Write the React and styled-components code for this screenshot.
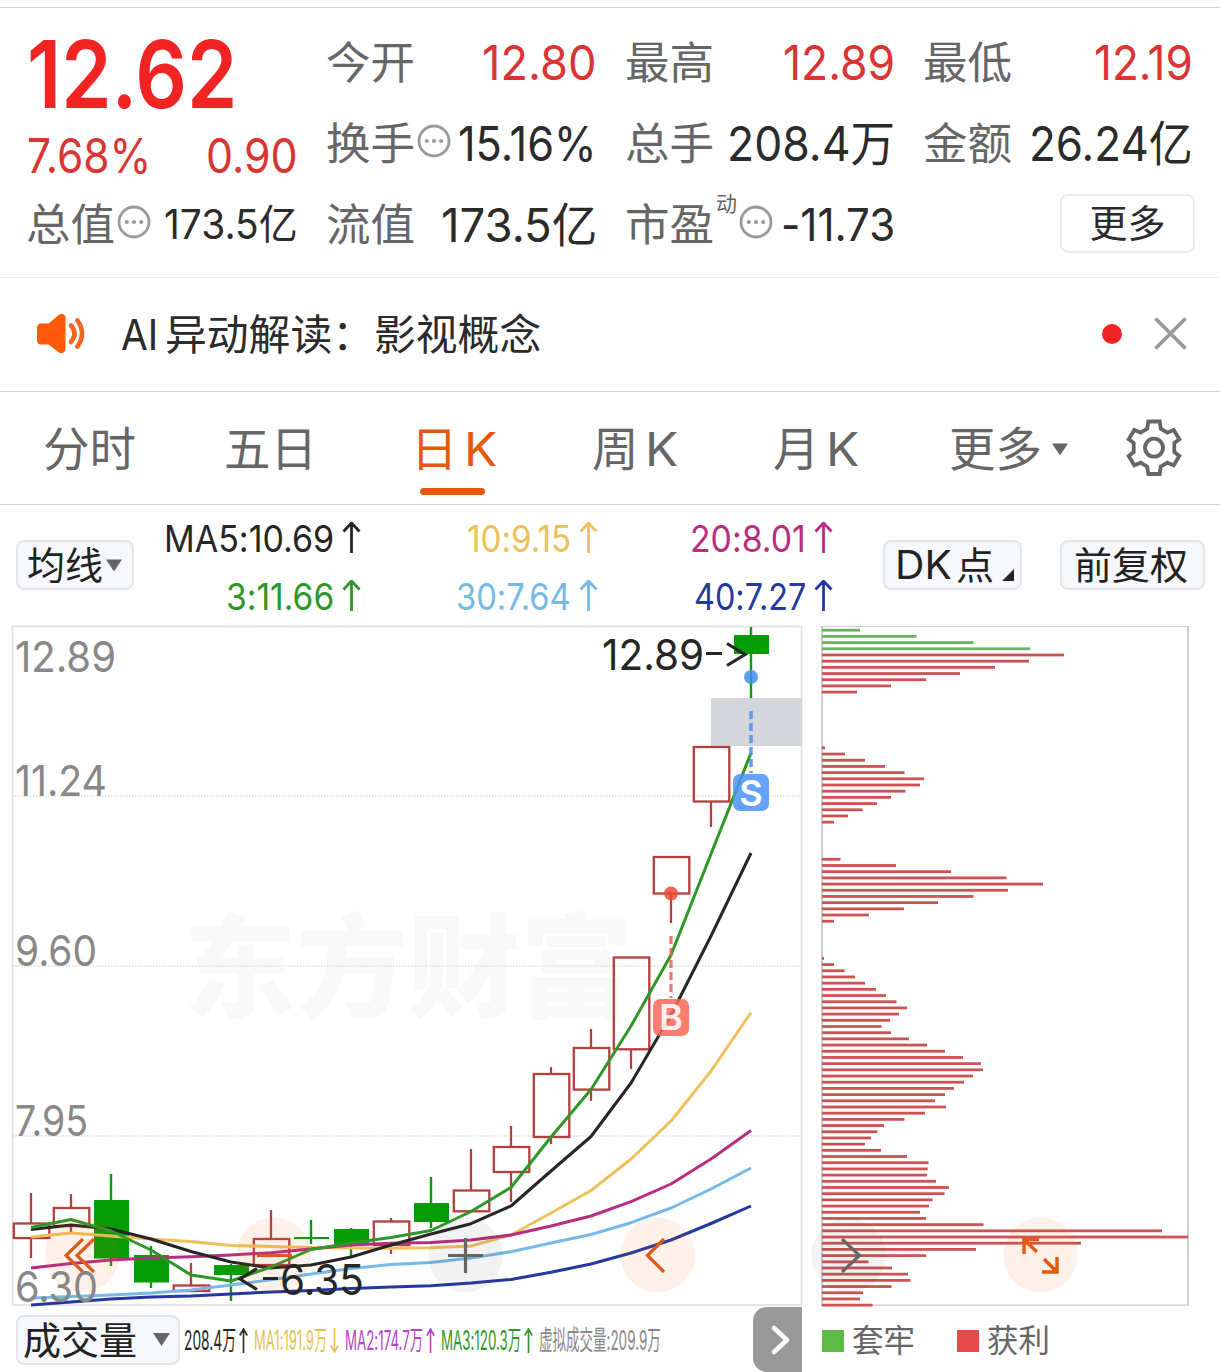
import React, { useLayoutEffect, useRef, useState } from "react";
import styled, { createGlobalStyle } from "styled-components";

const FONT = `Inter, "Noto Sans CJK SC", sans-serif`;

const GlobalStyle = createGlobalStyle`
  *, *::before, *::after { box-sizing: border-box; }
  html, body { margin: 0; padding: 0; background: #fff; }
  body { font-family: ${FONT}; font-feature-settings: "calt" 0; color: #2b2b2b; overflow: hidden; }
`;

const Page = styled.main`
  width: 1220px;
  height: 1372px;
  display: flex;
  flex-direction: column;
  background: #fff;
  overflow: hidden;
`;

/* ---------- text squeezed to a fixed measure ---------- */

const FitBox = styled.span`
  display: inline-block;
  flex: none;
  width: ${(p) => p.$w}px;
  height: ${(p) => p.$size}px;
  line-height: ${(p) => p.$size}px;
  font-size: ${(p) => p.$size}px;
  font-weight: ${(p) => p.$weight || 400};
  color: ${(p) => p.$color || "inherit"};
  white-space: nowrap;
`;

const FitInner = styled.span`
  display: inline-block;
  transform-origin: 0 50%;
`;

function Fit({ w, size, weight, color, children }) {
  const ref = useRef(null);
  const [scale, setScale] = useState(1);
  useLayoutEffect(() => {
    const natural = ref.current.offsetWidth;
    if (natural) setScale(w / natural);
  }, [w, size]);
  return (
    <FitBox $w={w} $size={size} $weight={weight} $color={color}>
      <FitInner ref={ref} style={{ transform: `scaleX(${scale})` }}>
        {children}
      </FitInner>
    </FitBox>
  );
}

/* ---------- quote header ---------- */

const Quote = styled.section`
  flex: none;
  margin-top: 7px;
  height: 271px;
  padding: 14px 27px 0 27px;
  border-top: 1px solid #d4d4d4;
  border-bottom: 1px solid #ececec;
  display: grid;
  grid-template-columns: 271px 270px 269px 269px;
  column-gap: 29px;
`;

const QuoteColumn = styled.div`
  display: flex;
  flex-direction: column;
`;

const Cell = styled.div`
  height: 81px;
  display: flex;
  align-items: center;
  justify-content: ${(p) => (p.$end ? "flex-end" : "space-between")};
`;

const PriceCell = styled(Cell)`
  height: 94px;
  padding-top: 10px;
`;

const ChangeCell = styled(Cell)`
  height: 68px;
  padding-top: 12px;
`;

const LabelGroup = styled.div`
  display: flex;
  align-items: center;
`;

const Label = styled.span`
  margin-left: -1px;
  font-size: 44.5px;
  line-height: 56px;
  color: #666;
`;

const Superscript = styled.span`
  font-size: 21px;
  line-height: 24px;
  margin: 0 0 41px 2px;
  color: #666;
`;

const MoreButton = styled.button`
  width: 135px;
  height: 59px;
  margin: 0 -2px 3px 0;
  padding: 0;
  border: 2px solid #e9ebed;
  border-radius: 8px;
  background: #fff;
  font-family: inherit;
  font-size: 38px;
  line-height: 50px;
  color: #2b2b2b;
`;

const HintSvg = styled.svg`
  margin: 0 0 6px 2px;
  flex: none;
`;

const HintIcon = () => (
  <HintSvg width="34" height="34" viewBox="0 0 34 34">
    <circle cx="17" cy="17" r="15" fill="none" stroke="#999" strokeWidth="2.8" />
    <circle cx="9.8" cy="17" r="2.1" fill="#999" />
    <circle cx="17" cy="17" r="2.1" fill="#999" />
    <circle cx="24.2" cy="17" r="2.1" fill="#999" />
  </HintSvg>
);

/* ---------- notice ---------- */

const Notice = styled.section`
  flex: none;
  height: 114px;
  padding: 0 33px 2px 36px;
  border-bottom: 1px solid #d4d4d4;
  display: flex;
  align-items: center;
`;

const NoticeText = styled.p`
  flex: 1;
  margin: 0 0 0 35px;
  padding-top: 2px;
  font-size: 41.8px;
  line-height: 56px;
  color: #2b2b2b;
  display: flex;
  align-items: center;
  gap: 7px;
`;

const RedDot = styled.i`
  width: 20px;
  height: 20px;
  border-radius: 50%;
  background: #f12423;
  margin-right: 32px;
`;

/* ---------- tabs ---------- */

const Tabs = styled.nav`
  flex: none;
  height: 113px;
  border-bottom: 1px solid #d4d4d4;
  padding: 0 37px 0 43px;
  display: flex;
  align-items: center;
`;

const Tab = styled.div`
  height: 112px;
  width: ${(p) => p.$w}px;
  flex: none;
  display: flex;
  align-items: center;
  gap: ${(p) => p.$gap || 6}px;
  padding-top: 2px;
  font-size: 46.5px;
  line-height: 60px;
  color: ${(p) => (p.$active ? "#e2590f" : "#666")};
  position: relative;

  &::after {
    content: "";
    display: ${(p) => (p.$active ? "block" : "none")};
    position: absolute;
    left: 9px;
    bottom: 9px;
    width: 65px;
    height: 7px;
    border-radius: 4px;
    background: #e2590f;
  }
`;

const GearSvg = styled.svg`
  margin-left: auto;
`;

/* ---------- moving average bar ---------- */

const MaBar = styled.section`
  flex: none;
  height: 115px;
  padding: 3px 15px 0 16px;
  display: flex;
  align-items: flex-start;
`;

const Chip = styled.button`
  flex: none;
  width: ${(p) => p.$w}px;
  height: 50px;
  padding: 0 0 0 ${(p) => p.$pl}px;
  margin: ${(p) => p.$m || "0"};
  border: 2px solid #e4e6e9;
  border-radius: 8px;
  background: #f7f8fb;
  font-family: inherit;
  font-size: 38px;
  line-height: 46px;
  color: #222;
  display: flex;
  align-items: center;
  gap: ${(p) => p.$gap || 0}px;
  white-space: nowrap;
`;

const Corner = styled.svg`
  align-self: flex-end;
  margin: 0 0 7px 3px;
`;

const MaGrid = styled.div`
  width: 698px;
  padding-top: 1px;
  display: grid;
  grid-template-columns: 227px 237px 235px;
  grid-auto-rows: 58px;
  justify-items: end;
`;

const MaItem = styled.div`
  display: flex;
  align-items: center;
  gap: 8px;
  color: ${(p) => p.$color};
`;

const ArrowSvg = styled.svg`
  flex: none;
  display: block;
`;

const UpArrow = () => (
  <ArrowSvg width="19" height="32" viewBox="0 0 19 32" fill="none" stroke="currentColor" strokeWidth="2.8">
    <path d="M9.5 31V1M1.5 9.5L9.5 1l8 8.5" />
  </ArrowSvg>
);

/* ---------- charts ---------- */

const Charts = styled.section`
  flex: none;
  height: 687px;
  display: flex;
`;

const ChartSvg = styled.svg`
  display: block;
  flex: none;
  overflow: visible;
  font-family: ${FONT};
`;

const RED = "#b3403f";
const GREEN = "#059c05";

/* up, bodyTop, bodyBottom, wickTop, wickBottom */
const candles = [
  [1, 1223.5, 1238, 1193, 1258],
  [1, 1208, 1226, 1194, 1232],
  [0, 1200, 1258.5, 1174, 1266],
  [0, 1255, 1282.5, 1246, 1288],
  [1, 1285.5, 1291, 1263, 1291],
  [0, 1265, 1275, 1264, 1301],
  [1, 1239, 1265, 1210, 1265],
  [0, 1237, 1239, 1220, 1244],
  [0, 1229, 1244, 1228, 1256],
  [1, 1221.5, 1245, 1218, 1254],
  [0, 1203, 1222, 1177, 1228],
  [1, 1190.5, 1211.3, 1149, 1211],
  [1, 1147, 1172, 1126, 1202],
  [1, 1074, 1137, 1067, 1144],
  [1, 1048, 1089.6, 1029, 1101],
  [1, 957.5, 1049.3, 957, 1069],
  [1, 857, 893.5, 857, 923],
  [1, 747, 801.5, 747, 827],
  [0, 635, 654, 627, 698],
];

const cx = (i) => 31 + i * 40;

const averages = [
  ["#2538a0", [1305, 1302, 1299, 1297, 1296, 1294, 1292, 1290.5, 1288.6, 1287, 1285.7, 1283, 1279.4, 1272.3, 1264, 1253, 1240, 1223.5, 1206]],
  ["#76b9e8", [1298, 1296.5, 1295, 1293, 1290, 1285, 1279.7, 1274, 1268.5, 1264.5, 1262.5, 1258, 1251.7, 1243, 1234.5, 1222.7, 1208, 1189, 1168]],
  ["#eec05c", [1237, 1233, 1236, 1239, 1241.5, 1245.5, 1246.5, 1247.5, 1248, 1248.3, 1247.8, 1246, 1235, 1213, 1190.5, 1159, 1121, 1071, 1012.5]],
  ["#b82d80", [1268, 1263.5, 1260, 1258, 1256.7, 1255, 1252.7, 1249, 1245, 1243.3, 1242.5, 1240, 1235, 1226, 1216, 1201.7, 1184, 1159, 1130.5]],
  ["#262626", [1229.5, 1225, 1229, 1239, 1251.5, 1262, 1268, 1265, 1257, 1245, 1234, 1223.7, 1206, 1171, 1136.5, 1083, 1015, 936, 853]],
  ["#2f9628", [1227.5, 1219.5, 1231, 1250, 1275, 1281, 1267, 1249.5, 1243, 1237.5, 1230.5, 1211.5, 1187.5, 1137, 1089.5, 1026, 955, 854, 753]],
];

const scaleLabels = [
  ["12.89", 672, 101],
  ["11.24", 796, 92],
  ["9.60", 966, 82],
  ["7.95", 1136, 73],
  ["6.30", 1302, 83],
];

const Candle = ({ i, data: [up, top, bottom, wt, wb] }) => {
  const x = cx(i);
  if (!up) {
    return (
      <g fill={GREEN}>
        <rect x={x - 17} y={top} width="35" height={bottom - top} />
        <rect x={x - 1.2} y={wt} width="2.4" height={wb - wt} />
      </g>
    );
  }
  return (
    <g stroke={RED} strokeWidth="2.3" fill="none">
      <rect x={x - 17.2} y={top} width="35.5" height={bottom - top} />
      <path d={`M${x} ${wt}V${top}M${x} ${bottom}V${wb}`} />
    </g>
  );
};

const FitText = ({ x, y, w, size, children, ...rest }) => (
  <text x={x} y={y} fontSize={size} textLength={w} lengthAdjust="spacingAndGlyphs" {...rest}>
    {children}
  </text>
);

const PEACH = "rgba(232,100,20,0.09)";
const MIST = "rgba(60,60,60,0.065)";

function KLineChart() {
  return (
    <ChartSvg width="802" height="687" viewBox="0 620 802 687">
      <text x="184" y="1009" fontSize="112" fontFamily="'Noto Sans CJK SC', sans-serif" fontWeight="900" fill="#f8f8f8">
        东方财富
      </text>
      <rect x="12.5" y="626.5" width="789" height="678.5" fill="none" stroke="#e2e2e2" strokeWidth="1.8" />
      {[796, 966, 1136].map((y) => (
        <path key={y} d={`M12 ${y}H802`} stroke="#dcdcdc" strokeWidth="1.5" strokeDasharray="1.5 1.5" />
      ))}
      <rect x="711" y="698" width="91" height="48" fill="#d5d6dc" />
      {candles.map((c, i) => (
        <Candle key={i} i={i} data={c} />
      ))}
      {averages.map(([color, ys]) => (
        <polyline
          key={color}
          fill="none"
          stroke={color}
          strokeWidth="3"
          strokeLinejoin="round"
          points={ys.map((y, i) => `${cx(i)},${y}`).join(" ")}
        />
      ))}

      <circle cx="751" cy="677" r="7" fill="#3f8ff0" fillOpacity="0.85" />
      <path d="M751 711V773" stroke="#4a90ee" strokeOpacity="0.85" strokeWidth="3.6" strokeDasharray="8 4" />
      <rect x="733" y="774" width="36" height="37" rx="7" fill="#4a94f8" fillOpacity="0.86" />
      <text x="751" y="806" fontSize="36" fontWeight="600" textAnchor="middle" fill="#fff">S</text>

      <circle cx="671" cy="893.5" r="7" fill="#f04a38" fillOpacity="0.85" />
      <path d="M671 936V998" stroke="#e8604f" strokeOpacity="0.85" strokeWidth="3.2" strokeDasharray="8 4" />
      <rect x="653" y="999" width="36" height="37" rx="7" fill="#fa6a5a" fillOpacity="0.86" />
      <text x="671" y="1030" fontSize="36" fontWeight="600" textAnchor="middle" fill="#fff" fillOpacity="0.9">B</text>

      <circle cx="82" cy="1255" r="37.3" fill={PEACH} />
      <circle cx="274" cy="1255" r="37.3" fill={PEACH} />
      <circle cx="465.5" cy="1255" r="37.3" fill={MIST} />
      <circle cx="657.7" cy="1255" r="37.3" fill={PEACH} />
      <g fill="none" stroke="#de5a1c" strokeWidth="3.2">
        <path d="M83 1239L66 1255.5L83 1272M94 1239L77 1255.5L94 1272" />
        <path d="M257 1255.5H292" />
        <path d="M664 1239L647.5 1255.5L664 1272" />
      </g>
      <path d="M448 1255.5H483M465.5 1238V1273" stroke="#666" strokeWidth="3.2" />

      {scaleLabels.map(([t, y, w]) => (
        <FitText key={t} x="15" y={y} w={w} size="43" fill="#888">
          {t}
        </FitText>
      ))}
      <FitText x="602" y="670" w="102" size="43" fill="#262626">12.89</FitText>
      <path d="M706 653.5H722M727 643.5L745 654.5L727 665.5" fill="none" stroke="#262626" strokeWidth="3.2" />
      <FitText x="280" y="1295" w="84" size="43" fill="#262626">6.35</FitText>
      <path d="M263 1278.5H278M257 1268.5L240 1279L257 1289.5" fill="none" stroke="#262626" strokeWidth="3.2" />
    </ChartSvg>
  );
}

/* runs of chip-distribution bars: first row index, then lengths in px */
const chipRuns = [
  [0, [38, 94.5, 151.5, 208, 242, 207, 173, 138, 104, 69, 35]],
  [19, [3, 23, 43, 63, 82.5, 102, 98, 83.5, 69, 55, 40.5, 26, 12]],
  [37, [18.5, 74, 129, 184.5, 221, 186, 151.5, 116, 82, 47, 12]],
  [53, [2, 12, 22.5, 33, 43, 54, 64, 74.5, 85, 77, 68, 59.5, 69, 87, 105, 123, 141, 159, 161, 151, 142, 132, 123, 113, 124, 103, 82.5, 62, 55.5, 49, 43, 59, 85]],
  [86, [106.5, 105.7, 105, 114, 127, 122.5, 110.5, 107, 98, 104, 161.5, 340, 366, 259, 154, 104, 46.5, 70, 86, 88.5, 69.5, 41, 38, 50.5]],
];

function ChipChart() {
  return (
    <ChartSvg width="418" height="687" viewBox="802 620 418 687">
      <path d="M821 626.5H1189M821 1305.2H1189" stroke="#ccc" strokeWidth="1.2" />
      <path d="M822 626V1305.5M1188 626V1305.5" stroke="#c9c9c9" strokeWidth="1.8" />
      {chipRuns.map(([start, lengths]) =>
        lengths.map((len, k) => {
          const row = start + k;
          return (
            <rect
              key={row}
              x="822"
              y={628.8 + row * 6.192}
              width={len}
              height="2.8"
              fill={row < 4 ? "#6bb35e" : "#cc5352"}
            />
          );
        })
      )}
      <circle cx="848.7" cy="1255" r="37.3" fill={MIST} />
      <circle cx="1040.5" cy="1255" r="37.3" fill={PEACH} />
      <path d="M842 1239L859.5 1255.5L842 1272" fill="none" stroke="#666" strokeWidth="3.2" />
      <path
        d="M1039 1239.5H1024V1254M1024 1239.5L1037 1252M1042 1272H1057V1257M1044 1259L1057 1272"
        fill="none"
        stroke="#e2590f"
        strokeWidth="3.4"
      />
    </ChartSvg>
  );
}

/* ---------- volume row ---------- */

const VolumeRow = styled.section`
  flex: none;
  height: 65px;
  display: flex;
  align-items: center;
  padding-left: 16px;
`;

const VolumeStats = styled.div`
  width: 573px;
  padding: 2px 0 0 4px;
  display: flex;
  align-items: center;
  gap: 6px;
`;

const Stat = styled.span`
  display: flex;
  align-items: center;
  gap: 3px;
  color: ${(p) => p.$color};
`;

const ThinArrow = ({ down }) => (
  <ArrowSvg width="9" height="25" viewBox="0 0 9 25" fill="none" stroke="currentColor" strokeWidth="1.6">
    <path d={down ? "M4.5 0V24M.8 17.5L4.5 24l3.7-6.5" : "M4.5 25V1M.8 7.5L4.5 1l3.7 6.5"} />
  </ArrowSvg>
);

const NextButton = styled.button`
  flex: none;
  width: 49px;
  height: 65px;
  border: 0;
  padding: 0 0 0 4px;
  border-radius: 14px 0 0 14px;
  background: #999;
  display: flex;
  align-items: center;
  justify-content: center;
`;

const Legend = styled.div`
  display: flex;
  align-items: center;
  margin-left: 20px;
  padding-top: 2px;
  gap: 42px;
`;

const LegendItem = styled.span`
  display: flex;
  align-items: center;
  gap: 8px;
  font-size: 31.5px;
  line-height: 40px;
  color: #666;

  &::before {
    content: "";
    width: 22px;
    height: 22px;
    background: ${(p) => p.$color};
  }
`;

const Down = ({ w = 17, h = 13 }) => (
  <ArrowSvg width={w} height={h} viewBox="0 0 17 13">
    <path d="M0 0H17L8.5 13Z" fill="#666" />
  </ArrowSvg>
);

export default function App() {
  return (
    <Page>
      <GlobalStyle />

      <Quote>
        <QuoteColumn>
          <PriceCell>
            <Fit w={210} size={94} weight={600} color="#f12423">12.62</Fit>
          </PriceCell>
          <ChangeCell>
            <Fit w={124} size={48} color="#d93534">7.68%</Fit>
            <Fit w={92} size={48} color="#d93534">0.90</Fit>
          </ChangeCell>
          <Cell>
            <LabelGroup><Label>总值</Label><HintIcon /></LabelGroup>
            <Fit w={134} size={41}>173.5亿</Fit>
          </Cell>
        </QuoteColumn>
        <QuoteColumn>
          <Cell><Label>今开</Label><Fit w={115} size={48} color="#d93534">12.80</Fit></Cell>
          <Cell>
            <LabelGroup><Label>换手</Label><HintIcon /></LabelGroup>
            <Fit w={139} size={48}>15.16%</Fit>
          </Cell>
          <Cell><Label>流值</Label><Fit w={156} size={47}>173.5亿</Fit></Cell>
        </QuoteColumn>
        <QuoteColumn>
          <Cell><Label>最高</Label><Fit w={112} size={48} color="#d93534">12.89</Fit></Cell>
          <Cell><Label>总手</Label><Fit w={168} size={48}>208.4万</Fit></Cell>
          <Cell>
            <LabelGroup><Label>市盈</Label><Superscript>动</Superscript><HintIcon /></LabelGroup>
            <Fit w={114} size={45}>-11.73</Fit>
          </Cell>
        </QuoteColumn>
        <QuoteColumn>
          <Cell><Label>最低</Label><Fit w={99} size={48} color="#d93534">12.19</Fit></Cell>
          <Cell><Label>金额</Label><Fit w={164} size={48}>26.24亿</Fit></Cell>
          <Cell $end><MoreButton>更多</MoreButton></Cell>
        </QuoteColumn>
      </Quote>

      <Notice>
        <svg width="50" height="42" viewBox="0 0 50 42">
          <path d="M5 10.5H12.5L23 1.8Q27-.8 29.5 3.5V36.5Q27 42 23 39.5L12.5 31.5H5Q1 31.5 1 27V15Q1 10.5 5 10.5Z" fill="#ff5a0a" />
          <path d="M35 12.5Q42 20.5 35 29" fill="none" stroke="#f2651f" strokeWidth="4.6" strokeLinecap="round" />
          <path d="M41.5 7.5Q50.5 20.5 41.5 33.5" fill="none" stroke="#f2651f" strokeWidth="4.6" strokeLinecap="round" />
        </svg>
        <NoticeText><Fit w={37} size={42}>AI</Fit><span>异动解读：影视概念</span></NoticeText>
        <RedDot />
        <svg width="33" height="33" viewBox="0 0 33 33">
          <path d="M1.5 1.5L31.5 31.5M31.5 1.5L1.5 31.5" stroke="#999" strokeWidth="3.8" />
        </svg>
      </Notice>

      <Tabs>
        <Tab $w={181}>分时</Tab>
        <Tab $w={187}>五日</Tab>
        <Tab $w={181} $active>日<Fit w={33} size={46.5}>K</Fit></Tab>
        <Tab $w={181}>周<Fit w={33} size={46.5}>K</Fit></Tab>
        <Tab $w={176}>月<Fit w={33} size={46.5}>K</Fit></Tab>
        <Tab $w={140} $gap={10}>更多<Down w={16} /></Tab>
        <GearSvg width="58" height="58" viewBox="0 0 58 58" fill="none" stroke="#666" strokeWidth="3.8">
          <path d="M23.3 2.5H34.7L35.7 9.7L42.3 13.7L48.7 11L54.3 20.3L49.3 24V33L54.3 37L48.7 46.3L42.3 43.7L35.7 47.7L34.7 55H23.3L22.3 47.7L15.6 43.7L9.3 46.3L3.7 37L8.7 33V24L3.7 20.3L9.3 11L15.6 13.7L22.3 9.7Z" />
          <circle cx="29" cy="28.7" r="9" />
        </GearSvg>
      </Tabs>

      <MaBar>
        <Chip $w={118} $pl={9} $gap={3} $m="32px 0 0">均线<Down w={16} /></Chip>
        <MaGrid>
          <MaItem $color="#262626"><Fit w={170} size={37}>MA5:10.69</Fit><UpArrow /></MaItem>
          <MaItem $color="#eec05c"><Fit w={104} size={37}>10:9.15</Fit><UpArrow /></MaItem>
          <MaItem $color="#b82d80"><Fit w={116} size={37}>20:8.01</Fit><UpArrow /></MaItem>
          <MaItem $color="#2f9628"><Fit w={108} size={37}>3:11.66</Fit><UpArrow /></MaItem>
          <MaItem $color="#76b9e8"><Fit w={115} size={37}>30:7.64</Fit><UpArrow /></MaItem>
          <MaItem $color="#2538a0"><Fit w={112} size={37}>40:7.27</Fit><UpArrow /></MaItem>
        </MaGrid>
        <Chip $w={139} $pl={9} $gap={5} $m="32px 0 0 51px">
          <Fit w={57} size={40}>DK</Fit>点
          <Corner width="12" height="12" viewBox="0 0 12 12">
            <path d="M12 0V12H0Z" fill="#222" />
          </Corner>
        </Chip>
        <Chip $w={145} $pl={12} $m="32px 0 0 38px">前复权</Chip>
      </MaBar>

      <Charts>
        <KLineChart />
        <ChipChart />
      </Charts>

      <VolumeRow>
        <Chip $w={164} $pl={5} $gap={16}>成交量<Down /></Chip>
        <VolumeStats>
          <Stat $color="#262626"><Fit w={52} size={27}>208.4万</Fit><ThinArrow /></Stat>
          <Stat $color="#e8bf4e"><Fit w={73} size={27}>MA1:191.9万</Fit><ThinArrow down /></Stat>
          <Stat $color="#b545c0"><Fit w={78} size={27}>MA2:174.7万</Fit><ThinArrow /></Stat>
          <Stat $color="#2f9628"><Fit w={80} size={27}>MA3:120.3万</Fit><ThinArrow /></Stat>
          <Stat $color="#888"><Fit w={122} size={27}>虚拟成交量:209.9万</Fit></Stat>
        </VolumeStats>
        <NextButton>
          <svg width="22" height="32" viewBox="0 0 22 32" fill="none" stroke="#fff" strokeWidth="4.6" strokeLinecap="round" strokeLinejoin="round">
            <path d="M5 4L18 16L5 28" />
          </svg>
        </NextButton>
        <Legend>
          <LegendItem $color="#5bb946">套牢</LegendItem>
          <LegendItem $color="#e84a4a">获利</LegendItem>
        </Legend>
      </VolumeRow>
    </Page>
  );
}
